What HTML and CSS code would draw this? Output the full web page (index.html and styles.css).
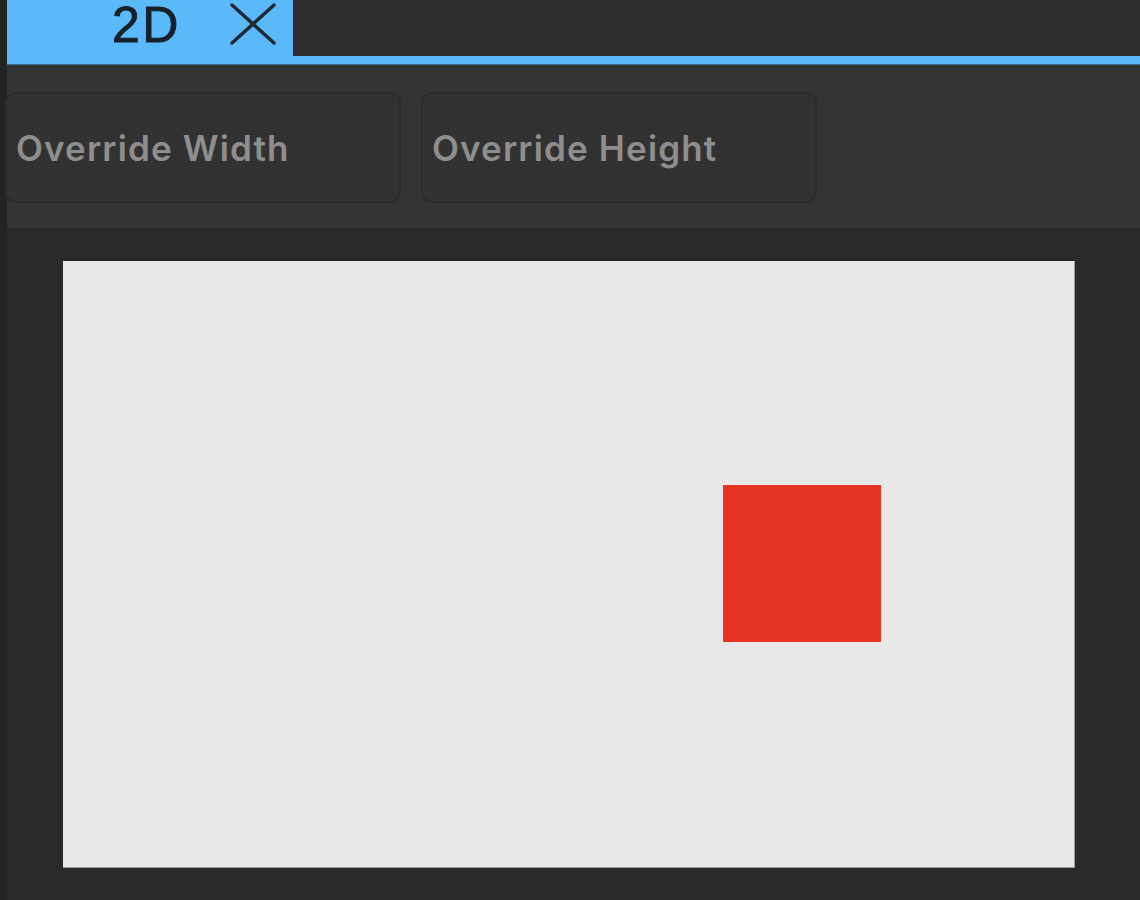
FILE: index.html
```html
<!DOCTYPE html>
<html>
<head>
<meta charset="utf-8">
<link rel="stylesheet" href="styles.css">
</head>
<body>
<div class="app">
  <div class="strip"></div>
  <div class="main">
    <div class="tabbar">
      <div class="tab">
        <span class="tab-label">2D</span>
        <svg class="tab-close" width="48" height="44" viewBox="0 0 48 44"><path d="M3 3 L45 41 M45 3 L3 41" stroke="#1e2a33" stroke-width="3.5" fill="none" stroke-linecap="round"/></svg>
      </div>
      <div class="tab-rest"></div>
    </div>
    <div class="tabline"></div>
    <div class="toolbar">
      <button class="btn btn-first">Override Width</button>
      <button class="btn">Override Height</button>
    </div>
    <div class="viewport">
      <div class="canvas">
        <div class="square"></div>
      </div>
    </div>
  </div>
</div>
</body>
</html>
```
FILE: styles.css
```css
html, body {
  margin: 0;
  padding: 0;
  background: #232323;
}
.app {
  display: flex;
  width: 1140px;
  height: 900px;
  overflow: hidden;
}
.strip {
  width: 7px;
  flex: none;
  background: #232323;
}
.main {
  flex: 1;
  display: flex;
  flex-direction: column;
}
.tabbar {
  display: flex;
  height: 57px;
  flex: none;
  background: #5bb9f9;
}
.tab {
  width: 285px;
  flex: none;
  background: #5bb9f9;
  display: flex;
  align-items: flex-start;
  box-sizing: border-box;
  padding-left: 105px;
  padding-top: 1px;
  gap: 48px;
}
.tab-label {
  font-family: "Liberation Sans", Arial, sans-serif;
  font-size: 50px;
  line-height: 48px;
  color: #15202a;
  -webkit-text-stroke: 0.9px #15202a;
  letter-spacing: 2.5px;
}
.tab-close {
  margin-top: 1px;
}
.tab-rest {
  flex: 1;
  background: #2c2c2c;
  height: 56px;
  margin-left: 1px;
}
.tabline {
  height: 8px;
  flex: none;
  background: #5bb9f9;
  border-bottom: 1px solid #3a6f93;
  box-sizing: border-box;
}
.toolbar {
  height: 163px;
  flex: none;
  background: #333333;
  display: flex;
  align-items: flex-start;
  gap: 20px;
  padding-top: 27px;
  box-sizing: border-box;
}
.btn {
  width: 396px;
  height: 111px;
  background: #323232;
  border: 2px solid #2b2b2b;
  border-radius: 11px;
  box-sizing: border-box;
  padding: 0 0 0 9px;
  text-align: left;
  font-family: "Inter", sans-serif;
  font-weight: 600;
  font-size: 35px;
  letter-spacing: 1.15px;
  color: #8e8e8e;
}
.btn-first {
  margin-left: -2px;
  padding-left: 9px;
}
.viewport {
  flex: 1;
  background: #2a2a2a;
  padding: 33px 0 0 56px;
}
.canvas {
  position: relative;
  width: 1012px;
  height: 607px;
  background: #e8e8e8;
  border-right: 1px solid #9a9a9a;
  border-bottom: 1px solid #9a9a9a;
  box-sizing: border-box;
}
.square {
  position: absolute;
  left: 660px;
  top: 224px;
  width: 158px;
  height: 157px;
  background: #e63323;
}
```
